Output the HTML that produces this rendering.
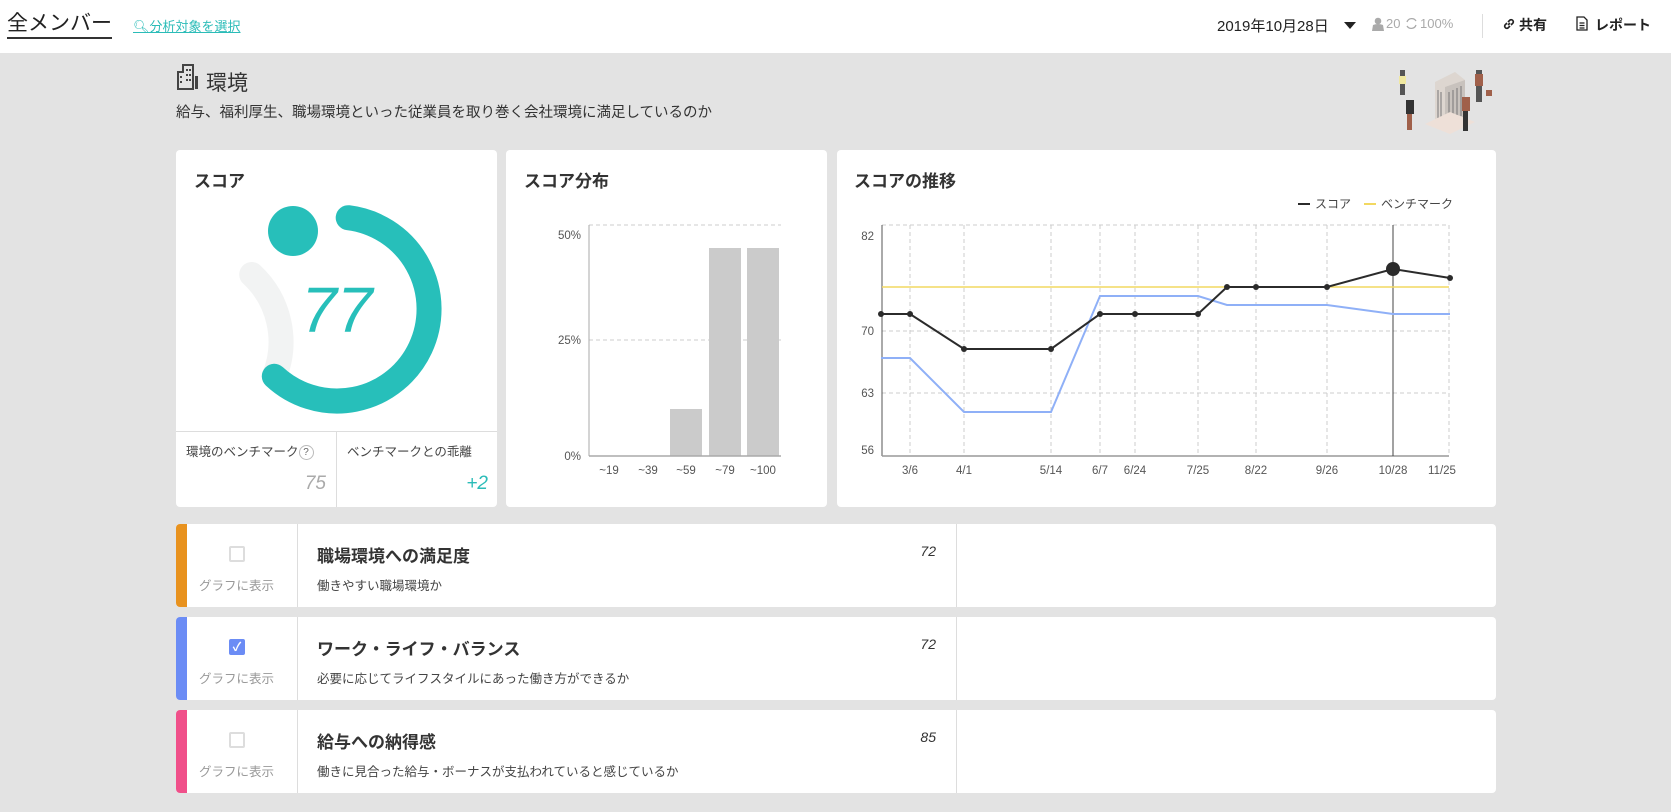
<!DOCTYPE html>
<html><head><meta charset="utf-8"><style>
*{margin:0;padding:0;box-sizing:border-box}
body{width:1671px;height:812px;background:#e3e3e3;font-family:"Liberation Sans","Noto Sans CJK JP",sans-serif;color:#333;position:relative;overflow:hidden}
.a{position:absolute;white-space:nowrap}
.hdr{position:absolute;left:0;top:0;width:1671px;height:53px;background:#fff}
.card{position:absolute;background:#fff;border-radius:4px}
.row{position:absolute;left:176px;width:1320px;height:83px;background:#fff;border-radius:4px;overflow:hidden}
.bar{position:absolute;left:0;top:0;width:11px;height:100%}
.cb{position:absolute;left:53px;top:22px;width:16px;height:16px;border:2px solid #ddd;border-radius:2px;background:#fff}
.gl{position:absolute;left:0;width:121px;top:51px;text-align:center;font-size:12.5px;color:#999}
.v1{position:absolute;left:121px;top:0;width:1px;height:100%;background:#ddd}
.v2{position:absolute;left:780px;top:0;width:1px;height:100%;background:#ddd}
.tt{position:absolute;left:141px;top:18px;font-size:17px;font-weight:bold;color:#333}
.ds{position:absolute;left:141px;top:51px;font-size:12.5px;color:#444}
.sc{position:absolute;left:700px;width:60px;text-align:right;top:19px;font-size:14px;font-style:italic;color:#333}
</style></head><body>
<div class="hdr"></div>
<div class="a" style="left:7px;top:11px;font-size:21px;color:#222;border-bottom:2px solid #333;line-height:26px">全メンバー</div>
<div class="a" style="left:133px;top:16px;font-size:13px;color:#2bbcb8;text-decoration:underline">&#x1F50D;&#xFE0E;分析対象を選択</div>
<div class="a" style="left:1217px;top:15px;font-size:15px;color:#222">2019年10月28日</div>
<div class="a" style="left:1344px;top:22px;width:0;height:0;border-left:6px solid transparent;border-right:6px solid transparent;border-top:7px solid #222"></div>
<svg class="a" style="left:1372px;top:17px" width="12" height="14" viewBox="0 0 12 14"><circle cx="6" cy="4" r="3.3" fill="#aaa"/><path d="M0 14 L1 8 Q6 6 11 8 L12 14Z" fill="#aaa"/></svg>
<div class="a" style="left:1386px;top:16px;font-size:13px;color:#aaa">20</div>
<svg class="a" style="left:1405px;top:17px" width="13" height="13" viewBox="0 0 13 13"><path d="M2 5A5 5 0 0 1 11 4M11 8A5 5 0 0 1 2 9" stroke="#aaa" stroke-width="1.3" fill="none"/></svg>
<div class="a" style="left:1420px;top:16px;font-size:13px;color:#aaa">100%</div>
<div class="a" style="left:1482px;top:14px;width:1px;height:24px;background:#ddd"></div>
<svg class="a" style="left:1502px;top:17px" width="14" height="14" viewBox="0 0 14 14"><path d="M6 8L8 6M5 6L3 8A2.2 2.2 0 0 0 6 11L8 9M9 8L11 6A2.2 2.2 0 0 0 8 3L6 5" stroke="#222" stroke-width="1.6" fill="none"/></svg>
<div class="a" style="left:1519px;top:15px;font-size:14px;font-weight:bold;color:#222">共有</div>
<svg class="a" style="left:1576px;top:16px" width="12" height="15" viewBox="0 0 12 15"><path d="M1 1H8L11 4V14H1Z M3.5 7H8.5M3.5 9.5H8.5M3.5 12H8.5" stroke="#222" stroke-width="1.3" fill="none"/></svg>
<div class="a" style="left:1595px;top:15px;font-size:14px;font-weight:bold;color:#222">レポート</div>

<svg class="a" style="left:177px;top:64px" width="22" height="26" viewBox="0 0 22 26"><path d="M1 25V8H6V1H16V25Z" fill="none" stroke="#444" stroke-width="2"/><g fill="#444"><rect x="9" y="5" width="2" height="2"/><rect x="12" y="5" width="2" height="2"/><rect x="9" y="10" width="2" height="2"/><rect x="12" y="10" width="2" height="2"/><rect x="9" y="15" width="2" height="2"/><rect x="12" y="15" width="2" height="2"/><rect x="3" y="12" width="2" height="2"/><rect x="3" y="17" width="2" height="2"/><rect x="18" y="12" width="3" height="13"/></g></svg>
<div class="a" style="left:206px;top:67px;font-size:21px;color:#333">環境</div>
<div class="a" style="left:176px;top:101px;font-size:14.5px;color:#333">給与、福利厚生、職場環境といった従業員を取り巻く会社環境に満足しているのか</div>
<svg class="a" style="left:1390px;top:62px" width="110" height="80" viewBox="0 0 110 80"><path d="M45 20L65 10L75 18L75 55L55 65L45 58Z" fill="#ddd6d0"/><path d="M55 25L75 18L75 55L55 65Z" fill="#c8c2bd"/><g stroke="#777" stroke-width="1"><path d="M48 28V58M51 30V60M59 30V60M63 28V58M67 26V56M71 24V54"/></g><path d="M35 62L60 72L85 60L60 50Z" fill="#eee0d8"/><rect x="10" y="8" width="5" height="25" fill="#555"/><rect x="9" y="14" width="7" height="8" fill="#f0e8a0"/><rect x="16" y="38" width="8" height="14" fill="#333"/><rect x="17" y="52" width="5" height="16" fill="#a0604a"/><rect x="86" y="8" width="6" height="32" fill="#555"/><rect x="85" y="12" width="8" height="12" fill="#a0604a"/><rect x="72" y="35" width="8" height="14" fill="#a0604a"/><rect x="73" y="49" width="5" height="20" fill="#333"/><rect x="96" y="28" width="6" height="6" fill="#a0604a"/></svg>

<div class="card" style="left:176px;top:150px;width:321px;height:357px"></div>
<div class="card" style="left:506px;top:150px;width:321px;height:357px"></div>
<div class="card" style="left:837px;top:150px;width:659px;height:357px"></div>
<div class="a" style="left:176px;top:431px;width:321px;height:1px;background:#ddd"></div>
<div class="a" style="left:336px;top:431px;width:1px;height:76px;background:#ddd"></div>
<div class="a" style="left:194px;top:167px;font-size:17px;font-weight:bold;color:#333">スコア</div>
<div class="a" style="left:524px;top:167px;font-size:17px;font-weight:bold;color:#333">スコア分布</div>
<div class="a" style="left:854px;top:167px;font-size:17px;font-weight:bold;color:#333">スコアの推移</div>
<div class="a" style="left:186px;top:441px;font-size:12.5px;color:#444">環境のベンチマーク<span style="display:inline-block;width:15px;height:15px;border:1px solid #bbb;border-radius:50%;font-size:10px;text-align:center;line-height:13px;color:#666;vertical-align:middle">?</span></div>
<div class="a" style="left:347px;top:441px;font-size:12.5px;color:#444">ベンチマークとの乖離</div>
<div class="a" style="left:270px;top:473px;width:56px;text-align:right;font-size:19px;font-style:italic;color:#aaa">75</div>
<div class="a" style="left:430px;top:473px;width:58px;text-align:right;font-size:19px;font-style:italic;color:#2bbcb8">+2</div>

<svg class="a" style="left:0;top:0" width="1671" height="812" font-family="Liberation Sans,sans-serif">
<path d="M251.7 274.5 A92 92 0 0 1 274.3 376.3" stroke="#f2f3f3" stroke-width="25" fill="none" stroke-linecap="round"/>
<path d="M348.2 217.7 A92 92 0 1 1 274.3 376.3" stroke="#27bfba" stroke-width="25" fill="none" stroke-linecap="round"/>
<circle cx="293" cy="231" r="25" fill="#27bfba"/>
<text x="337" y="332" text-anchor="middle" font-size="64" font-style="italic" fill="#27bfba">77</text>
<g stroke="#ccc" stroke-dasharray="4 3"><line x1="589" y1="225" x2="781" y2="225"/><line x1="589" y1="340" x2="781" y2="340"/></g>
<g fill="#cbcbcb"><rect x="670" y="409" width="32" height="47"/><rect x="709" y="248" width="32" height="208"/><rect x="747" y="248" width="32" height="208"/></g>
<line x1="589" y1="225" x2="589" y2="456" stroke="#aaa"/><line x1="589" y1="456" x2="781" y2="456" stroke="#aaa" stroke-width="1.5"/>
<g font-size="11.5" fill="#555" text-anchor="end"><text x="581" y="239">50%</text><text x="581" y="344">25%</text><text x="581" y="460">0%</text></g>
<g font-size="11.5" fill="#555" text-anchor="middle"><text x="609" y="474">~19</text><text x="648" y="474">~39</text><text x="686" y="474">~59</text><text x="725" y="474">~79</text><text x="763" y="474">~100</text></g>
<g stroke="#ccc" stroke-dasharray="4 3"><line x1="882" y1="225" x2="1449" y2="225"/><line x1="882" y1="331" x2="1449" y2="331"/><line x1="882" y1="393" x2="1449" y2="393"/>
<line x1="910" y1="225" x2="910" y2="456"/><line x1="964" y1="225" x2="964" y2="456"/><line x1="1051" y1="225" x2="1051" y2="456"/><line x1="1100" y1="225" x2="1100" y2="456"/><line x1="1135" y1="225" x2="1135" y2="456"/><line x1="1198" y1="225" x2="1198" y2="456"/><line x1="1256" y1="225" x2="1256" y2="456"/><line x1="1327" y1="225" x2="1327" y2="456"/><line x1="1449" y1="225" x2="1449" y2="456"/></g>
<line x1="882" y1="225" x2="882" y2="456" stroke="#555"/><line x1="882" y1="456" x2="1449" y2="456" stroke="#999" stroke-width="1.5"/>
<line x1="1393" y1="225" x2="1393" y2="456" stroke="#444"/>
<line x1="882" y1="287" x2="1449" y2="287" stroke="#f2d861" stroke-width="1.5"/>
<polyline points="881,358 910,358 964,412 1051,412 1100,296 1198,296 1227,305 1327,305 1393,314 1450,314" stroke="#8fb0f7" stroke-width="2" fill="none"/>
<polyline points="881,314 910,314 964,349 1051,349 1100,314 1135,314 1198,314 1227,287 1256,287 1327,287 1393,269 1450,278" stroke="#2b2b2b" stroke-width="2" fill="none"/>
<g fill="#2b2b2b"><circle cx="881" cy="314" r="3"/><circle cx="910" cy="314" r="3"/><circle cx="964" cy="349" r="3"/><circle cx="1051" cy="349" r="3"/><circle cx="1100" cy="314" r="3"/><circle cx="1135" cy="314" r="3"/><circle cx="1198" cy="314" r="3"/><circle cx="1227" cy="287" r="3"/><circle cx="1256" cy="287" r="3"/><circle cx="1327" cy="287" r="3"/><circle cx="1393" cy="269" r="7"/><circle cx="1450" cy="278" r="3"/></g>
<g font-size="11.5" fill="#555" text-anchor="end"><text x="874" y="240">82</text><text x="874" y="335">70</text><text x="874" y="397">63</text><text x="874" y="454">56</text></g>
<g font-size="11.5" fill="#555" text-anchor="middle"><text x="910" y="474">3/6</text><text x="964" y="474">4/1</text><text x="1051" y="474">5/14</text><text x="1100" y="474">6/7</text><text x="1135" y="474">6/24</text><text x="1198" y="474">7/25</text><text x="1256" y="474">8/22</text><text x="1327" y="474">9/26</text><text x="1393" y="474">10/28</text><text x="1442" y="474">11/25</text></g>
<line x1="1298" y1="204" x2="1310" y2="204" stroke="#2b2b2b" stroke-width="2"/><text x="1315" y="208" font-size="12" fill="#444">スコア</text>
<line x1="1364" y1="204" x2="1376" y2="204" stroke="#f2d861" stroke-width="2"/><text x="1381" y="208" font-size="12" fill="#444">ベンチマーク</text>
</svg>

<div class="row" style="top:524px"><div class="bar" style="background:#e8921e"></div><div class="cb"></div><div class="gl">グラフに表示</div><div class="v1"></div><div class="v2"></div><div class="tt">職場環境への満足度</div><div class="ds">働きやすい職場環境か</div><div class="sc">72</div></div>
<div class="row" style="top:617px"><div class="bar" style="background:#6b8cf5"></div><div class="cb" style="background:#6b8cf5;border-color:#6b8cf5;color:#fff;font-size:12px;line-height:12px;text-align:center;font-weight:bold">✓</div><div class="gl">グラフに表示</div><div class="v1"></div><div class="v2"></div><div class="tt">ワーク・ライフ・バランス</div><div class="ds">必要に応じてライフスタイルにあった働き方ができるか</div><div class="sc">72</div></div>
<div class="row" style="top:710px"><div class="bar" style="background:#f0508a"></div><div class="cb"></div><div class="gl">グラフに表示</div><div class="v1"></div><div class="v2"></div><div class="tt">給与への納得感</div><div class="ds">働きに見合った給与・ボーナスが支払われていると感じているか</div><div class="sc">85</div></div>
</body></html>
